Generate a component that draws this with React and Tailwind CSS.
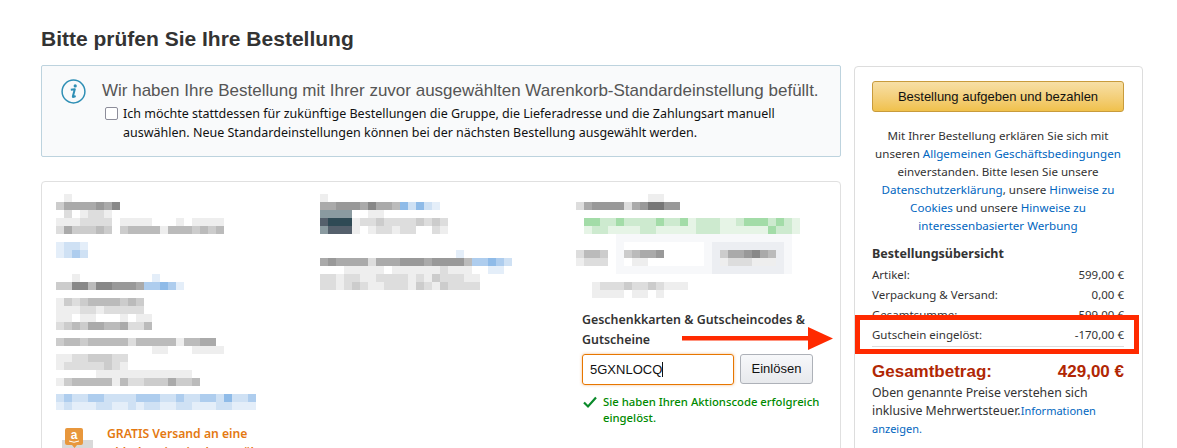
const palette = {
  p: '#e4eef9', q: '#cfe1f4', r: '#aecdee', s: '#8fbbe8',
  u: '#e6f4e6', v: '#cdeacf', w: '#a3dca8',
  x: '#2f4a55', y: '#55606c', z: '#8a9aa0',
  h: '#f7f8fa', i: '#eceef2',
};

function cellColor(ch) {
  if (ch === ' ') return 'transparent';
  if (palette[ch]) return palette[ch];
  const v = parseInt(ch, 16) * 17;
  return `rgb(${v},${v},${v})`;
}

// blurred-out address data, one char per 8px cell
function Mosaic({ rows }) {
  return (
    <div className="flex flex-col">
      {rows.map((row, i) => (
        <div key={i} className="flex h-2">
          {row.split('').map((ch, j) => (
            <div key={j} className="w-2 h-2 shrink-0" style={{ backgroundColor: cellColor(ch) }}></div>
          ))}
        </div>
      ))}
    </div>
  );
}

const colOne = [
  'fe',
  'caaaa9a8',
  'fdfeddef',
  'eeeddddfeeeefffefeeee',
  'dacccbcfcbbbbebbbcbcb',
  '',
  'pqqp',
  'pqrq',
  '',
  '',
  'ffefffffffffpf',
  'cc88b88999arrsrp',
  '',
  'ecdcbbbbcbc',
  'eeeddeddddd',
  'eefeefffefee',
  'dcbcaabbaddbf',
  '         f',
  'cbbcbbbbbdbbbbbebbaaf',
  'ffffffffffffeefffeeee',
  'eeddcccdd',
  'edddddcde',
  'fffffeeeeeeeeeeeef',
  'ecbbbbbebddcccaccb',
  '',
  'qrqqrrqqqqrrrqqrqqrrqsqqr',
  'pqpppqqppqpqqppqqpppqqppp',
];

const colTwo = [
  'e ff',
  'aa999a8aabsqsqp',
  'zzzzffee',
  'yxxxeddcddddcdcd',
  'zyyyefeddeddffde',
  '',
  '',
  '  f    f  ff     p',
  'a9aaaadaaa999a9999brrsrq',
  'fffeeeeefeeeeeedeeeffppf',
  'ddeddeeddddedecdddee',
  'ddedcdeedddecdecdddd',
];

const colThree = [
  'ff f   f ee',
  'da9999da97799',
  '',
  ' wwvvwvvvvwvvwuvvvuuvwwwvwvu',
  ' uvvuuuuvvuuuuuvvvuuuuuuwvvu',
  '     hhhhhhhhhhhhhhhhhhhhhh',
  '     h          hiiiiiiiiih',
  'dbbc hcbaa9     hicaa98abih',
  'eddd hfeef      hiedddeeeih',
  '     hhhhhhhhhhhhiiiiiiiiih',
  '',
  '  edddcddcdeee',
  '  eeeefeefefff',
];

const linkCls = 'text-[#0066c0]';

function InfoIcon() {
  return (
    <svg width="25" height="25" viewBox="0 0 25 25" className="shrink-0">
      <circle cx="12.5" cy="12.5" r="11.4" fill="none" stroke="#2f8fb5" strokeWidth="1.5" />
      <circle cx="14.2" cy="6.9" r="1.6" fill="#2f8fb5" />
      <path d="M9.8 10.8 L13.8 10.2 L11.9 17.2 Q11.7 18.2 12.7 17.9 L14.6 17" fill="none" stroke="#2f8fb5" strokeWidth="2" strokeLinejoin="round" />
    </svg>
  );
}

function SummaryRow({ label, value }) {
  return (
    <div className="flex justify-between h-5 items-center">
      <span>{label}</span>
      <span>{value}</span>
    </div>
  );
}

export default function App() {
  return (
    <div className="relative h-[448px] w-[1177px] overflow-hidden bg-white text-[#333] font-['Noto_Sans','Open_Sans',sans-serif] text-[12px]">
      <div className="pl-[41px] pt-[27px]">
        <h1 className="font-['Liberation_Sans',Arial,sans-serif] font-bold text-[21px] leading-6 text-[#333]">Bitte prüfen Sie Ihre Bestellung</h1>

        <div className="flex items-start gap-[13px] mt-[14px]">
          <div className="w-[800px] flex flex-col gap-6">
            <div className="h-[92px] border border-[#bdd3de] bg-[#f9fafb] rounded-[2px] flex pl-[19px] pt-[13px]">
              <InfoIcon />
              <div className="ml-[16px] -mt-[1px] min-w-0">
                <div className="font-['Liberation_Sans',Arial,sans-serif] text-[17px] leading-[26px] text-[#555] whitespace-nowrap">Wir haben Ihre Bestellung mit Ihrer zuvor ausgewählten Warenkorb-Standardeinstellung befüllt.</div>
                <div className="flex ml-[3px]">
                  <span className="w-[13px] h-[13px] mt-[3px] shrink-0 border border-[#8d8d9a] rounded-[2px] bg-white"></span>
                  <p className="ml-[5px] text-[12.5px] leading-[19px] text-[#111] w-[680px]">Ich möchte stattdessen für zukünftige Bestellungen die Gruppe, die Lieferadresse und die Zahlungsart manuell auswählen. Neue Standardeinstellungen können bei der nächsten Bestellung ausgewählt werden.</p>
                </div>
              </div>
            </div>

            <div className="h-[300px] border border-[#e0e0e0] rounded-[4px] grid grid-cols-[264px_256px_1fr] pl-[14px] pt-[12px]">
              <div>
                <Mosaic rows={colOne} />
                <div className="flex mt-[18px] ml-[6px]">
                  <svg width="32" height="40" viewBox="0 0 32 40" className="shrink-0">
                    <rect x="0" y="12" width="31" height="28" fill="#d9d9d9" />
                    <path d="M5 0 H19 Q21 0 21 2 V15 Q21 17 19 17 H15 L12.5 20 L10 17 H5 Q3 17 3 15 V2 Q3 0 5 0 Z" fill="#e8973c" />
                    <text x="12" y="11" textAnchor="middle" fontSize="12" fontWeight="700" fill="#fff" fontFamily="Liberation Sans, sans-serif">a</text>
                    <path d="M7 13 Q12 15.5 17 13" fill="none" stroke="#fff" strokeWidth="1" />
                  </svg>
                  <div className="ml-[13px] text-[#e47911] font-semibold text-[12.2px] leading-[19px] -mt-[4px]">
                    <div>GRATIS Versand an eine</div>
                    <div>Abholstation in Ihrer Nähe</div>
                  </div>
                </div>
              </div>
              <div>
                <Mosaic rows={colTwo} />
              </div>
              <div>
                <Mosaic rows={colThree} />
                <div className="ml-[6px] mt-[12px] w-[250px]">
                  <div className="font-semibold text-[12.4px] leading-5 text-[#333] w-[240px]">Geschenkkarten &amp; Gutscheincodes &amp; Gutscheine</div>
                  <div className="flex gap-[6px] mt-[4px]">
                    <div className="w-[152px] h-[31px] border border-[#e77600] rounded-[3px] shadow-[0_0_3px_rgba(228,121,17,0.5)] flex items-center pl-[7px] font-['Liberation_Sans',Arial,sans-serif] text-[13px] text-[#111]">
                      5GXNLOCQ<span className="w-px h-[15px] bg-[#111]"></span>
                    </div>
                    <button className="w-[73px] h-[30px] border border-[#adb1b8] rounded-[3px] bg-gradient-to-b from-[#f7f8fa] to-[#e7e9ec] font-['Liberation_Sans',Arial,sans-serif] text-[13px] text-[#111]">Einlösen</button>
                  </div>
                  <div className="flex mt-[9px] text-[#008a00] font-medium text-[11.3px] leading-4">
                    <svg width="16" height="14" viewBox="0 0 16 14" className="shrink-0 mt-[1px]">
                      <path d="M2 7.5 L6 11.5 L14 2.5" fill="none" stroke="#0a8a2a" strokeWidth="2.2" />
                    </svg>
                    <span className="ml-[5px]">Sie haben Ihren Aktionscode erfolgreich eingelöst.</span>
                  </div>
                </div>
              </div>
            </div>
          </div>

          <aside className="w-[289px] h-[420px] border border-[#ddd] rounded-[4px] pl-[17px] pr-[18px] pt-[14px] mt-[1px]">
            <button className="w-full h-[31px] rounded-[3px] border border-[#c89b3c] bg-gradient-to-b from-[#f7dfa5] to-[#f0c14b] font-['Liberation_Sans',Arial,sans-serif] text-[13px] text-[#111]">Bestellung aufgeben und bezahlen</button>
            <p className="mt-[15px] text-center text-[11.6px] leading-[18px] text-[#333] whitespace-nowrap">
              Mit Ihrer Bestellung erklären Sie sich mit<br />
              unseren <span className={linkCls}>Allgemeinen Geschäftsbedingungen</span><br />
              einverstanden. Bitte lesen Sie unsere<br />
              <span className={linkCls}>Datenschutzerklärung</span>, unsere <span className={linkCls}>Hinweise zu</span><br />
              <span className={linkCls}>Cookies</span> und unsere <span className={linkCls}>Hinweise zu</span><br />
              <span className={linkCls}>interessenbasierter Werbung</span>
            </p>
            <div className="mt-[10px] font-bold text-[12.5px] leading-[18px]">Bestellungsübersicht</div>
            <div className="mt-[2px] text-[11.5px]">
              <SummaryRow label="Artikel:" value="599,00 €" />
              <SummaryRow label="Verpackung & Versand:" value="0,00 €" />
              <SummaryRow label="Gesamtsumme:" value="599,00 €" />
              <div className="relative -mt-[10px] -ml-[17px] -mr-[15px] h-[39px] border-[5px] border-[#ff2a00] bg-white pl-[12px] pr-[10px]">
                <div className="h-[27px] pt-[4px] border-b border-[#ddd] flex justify-between items-center">
                  <span>Gutschein eingelöst:</span>
                  <span>-170,00 €</span>
                </div>
              </div>
            </div>
            <div className="mt-[6px] flex justify-between font-['Liberation_Sans',Arial,sans-serif] font-bold text-[17px] leading-6 text-[#b12704]">
              <span>Gesamtbetrag:</span>
              <span>429,00 €</span>
            </div>
            <p className="text-[12.3px] leading-[18px]">Oben genannte Preise verstehen sich inklusive Mehrwertsteuer.<span className={`${linkCls} text-[11px]`}>Informationen anzeigen.</span></p>
          </aside>
        </div>
      </div>

      {/* annotation arrow on top of the screenshot */}
      <svg width="152" height="24" viewBox="0 0 152 24" className="absolute left-[682px] top-[327px]">
        <rect x="0" y="9" width="127" height="4.5" fill="#ff2a00" />
        <polygon points="126,0 151,11.5 126,23" fill="#ff2a00" />
      </svg>
    </div>
  );
}
